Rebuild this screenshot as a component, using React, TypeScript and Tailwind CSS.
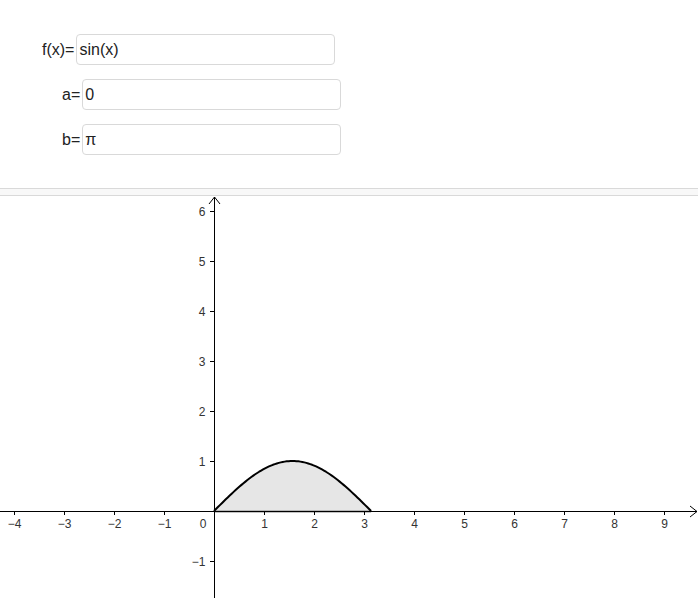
import React from "react";

const OX = 214;
const OY = 315;
const U = 50;

function Graph() {
  const xs = [-4, -3, -2, -1, 1, 2, 3, 4, 5, 6, 7, 8, 9];
  const ys = [-1, 1, 2, 3, 4, 5, 6];
  const pts: string[] = [];
  const N = 80;
  for (let i = 0; i <= N; i++) {
    const t = (Math.PI * i) / N;
    pts.push(`${(OX + t * U).toFixed(2)},${(OY - Math.sin(t) * U).toFixed(2)}`);
  }
  const curve = "M" + pts.join(" L");
  const area = curve + ` L${OX + Math.PI * U},${OY} Z`;
  return (
    <svg width={698} height={402} className="block" style={{ fontFamily: "'Liberation Sans', Arial, sans-serif" }}>
      <path d={area} fill="#e6e6e6" stroke="none" />
      <line x1={OX} y1={OY + 0.5} x2={OX + Math.PI * U} y2={OY + 0.5} stroke="#888" strokeWidth={2} />
      {/* axes */}
      <line x1={0} y1={OY + 0.5} x2={697} y2={OY + 0.5} stroke="#000" strokeWidth={1} />
      <line x1={OX + 0.5} y1={1} x2={OX + 0.5} y2={402} stroke="#000" strokeWidth={1} />
      <polyline points={`690,${OY - 5} 697,${OY + 0.5} 690,${OY + 6}`} fill="none" stroke="#000" strokeWidth={1} />
      <polyline points={`${OX - 5},8 ${OX + 0.5},1 ${OX + 6},8`} fill="none" stroke="#000" strokeWidth={1} />
      {xs.map((v) => {
        const x = OX + v * U + 0.5;
        return (
          <g key={"x" + v}>
            <line x1={x} y1={OY} x2={x} y2={OY + 4} stroke="#000" strokeWidth={1} />
            <text x={x} y={OY + 16.5} fontSize={12} fill="#333" textAnchor="middle">
              {v < 0 ? "\u2212" + -v : v}
            </text>
          </g>
        );
      })}
      {ys.map((v) => {
        const y = OY - v * U + 0.5;
        return (
          <g key={"y" + v}>
            <line x1={OX - 4} y1={y} x2={OX} y2={y} stroke="#000" strokeWidth={1} />
            <text x={OX - 8.5} y={y + 4} fontSize={12} fill="#333" textAnchor="end">
              {v < 0 ? "\u2212" + -v : v}
            </text>
          </g>
        );
      })}
      <text x={OX - 11} y={OY + 16.5} fontSize={12} fill="#333" textAnchor="middle">0</text>
      <path d={curve} fill="none" stroke="#000" strokeWidth={2} strokeLinejoin="round" />
    </svg>
  );
}

function Row({ label, value, pl }: { label: string; value: string; pl: string }) {
  return (
    <div className={`flex items-center ${pl}`}>
      <span className="text-[16px] text-[#222] leading-none mr-[2px]">{label}</span>
      <div className="w-[259px] h-[31px] border border-[#d9d9d9] rounded-[4px] flex items-center pl-[2px] text-[16px] text-[#222] bg-white">
        {value}
      </div>
    </div>
  );
}

export default function App() {
  return (
    <div className="w-[698px] bg-white" style={{ fontFamily: "'Liberation Sans', Arial, sans-serif" }}>
      <div className="h-[188px] pt-[34px] flex flex-col gap-[14px]">
        <Row label="f(x)=" value="sin(x)" pl="pl-[42px]" />
        <Row label="a=" value="0" pl="pl-[62px]" />
        <Row label="b=" value="π" pl="pl-[62px]" />
      </div>
      <div className="h-[8px] bg-[#f8f8f8] border-y border-[#d9d9d9]" />
      <Graph />
    </div>
  );
}
